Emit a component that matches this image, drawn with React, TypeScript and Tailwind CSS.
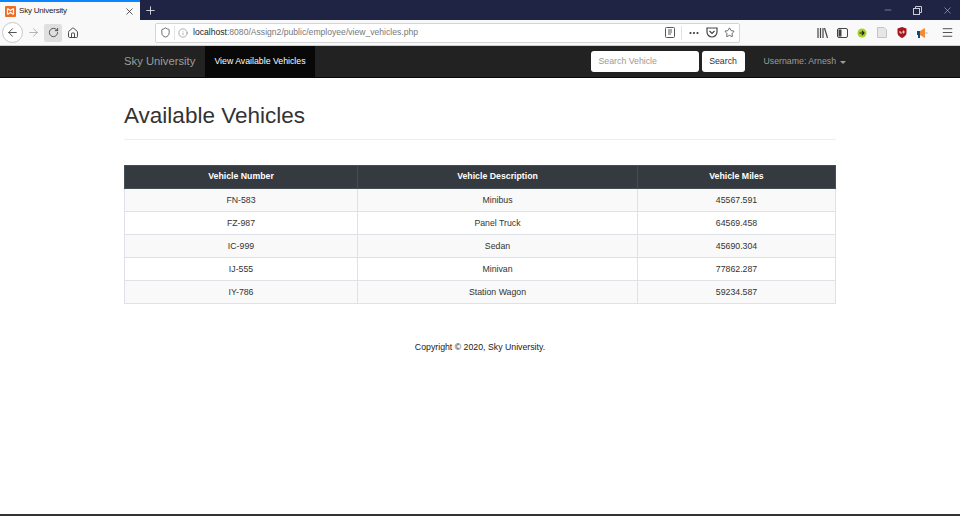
import { ArrowLeft, ArrowRight, RotateCw, Home, Shield, Info, Star, X, Plus, Minus, Menu, Ellipsis } from 'lucide-react';

const vehicles = [
  { number: 'FN-583', description: 'Minibus', miles: '45567.591' },
  { number: 'FZ-987', description: 'Panel Truck', miles: '64569.458' },
  { number: 'IC-999', description: 'Sedan', miles: '45690.304' },
  { number: 'IJ-555', description: 'Minivan', miles: '77862.287' },
  { number: 'IY-786', description: 'Station Wagon', miles: '59234.587' },
];

function BrowserChrome() {
  return (
    <div className="h-[46px] shrink-0 flex flex-col">
      <div className="h-[20px] bg-[#1f2445] flex items-stretch text-white">
        <div className="w-[140px] bg-[#f9f9fa] border-t-2 border-[#0a84ff] flex items-center pl-[5px] pr-[4px] text-[#222]">
          <svg width="11" height="11" viewBox="0 0 11 11" className="shrink-0">
            <rect width="11" height="11" rx="1" fill="#ee6c25" />
            <path d="M2.5 2.5 L5.5 4.5 L8.5 2.5 M2.5 8.5 L5.5 6.5 L8.5 8.5 M2.5 2.5 V8.5 M8.5 2.5 V8.5" stroke="#fff" strokeWidth="1.2" fill="none" />
          </svg>
          <span className="ml-[3px] text-[8px] tracking-[-0.2px] flex-1">Sky University</span>
          <X size={11} strokeWidth={1.6} className="mr-[1px]" />
        </div>
        <div className="w-[20px] flex items-center justify-center">
          <Plus size={13} strokeWidth={1.6} className="text-[#e6e7ee]" />
        </div>
        <div className="flex-1" />
        <div className="flex items-center gap-[20px] pr-[7px] text-[#c9cbd6]">
          <Minus size={10} strokeWidth={1.2} />
          <svg width="9" height="9" viewBox="0 0 9 9" fill="none" stroke="currentColor">
            <rect x="0.5" y="2.5" width="6" height="6" />
            <path d="M2.5 2.5 V0.5 H8.5 V6.5 H6.5" />
          </svg>
          <X size={11} strokeWidth={1.2} />
        </div>
      </div>
      <div className="h-[26px] bg-[#f9f9fa] border-b border-[#cfcfd2] flex items-center text-[#3a3a3c]">
        <div className="ml-[2px] w-[21px] h-[21px] rounded-full border border-[#c8c8ca] bg-white flex items-center justify-center">
          <ArrowLeft size={13} strokeWidth={1.6} />
        </div>
        <ArrowRight size={13} strokeWidth={1.6} className="ml-[4px] text-[#a8a8aa]" />
        <div className="ml-[4px] w-[18px] h-[18px] rounded-[2px] bg-[#dfdfe0] flex items-center justify-center">
          <RotateCw size={11} strokeWidth={1.8} />
        </div>
        <Home size={12} strokeWidth={1.8} className="ml-[5px]" />
        <div className="ml-[76px] w-[585px] h-[20px] bg-white border border-[#d4d4d6] rounded-[2px] flex items-center pl-[4px] pr-[3px] shrink-0">
          <Shield size={11} strokeWidth={1.6} />
          <div className="ml-[3px] w-px h-[14px] bg-[#e3e3e5]" />
          <Info size={10} strokeWidth={1.4} className="ml-[3px] text-[#77777a]" />
          <span className="ml-[5px] text-[8.6px] text-[#77777a]">
            <span className="text-[#222]">localhost</span>:8080/Assign2/public/employee/view_vehicles.php
          </span>
          <div className="flex-1" />
          <svg width="10" height="11" viewBox="0 0 10 11" fill="none" stroke="#555" className="mr-[6px]">
            <rect x="0.5" y="0.5" width="9" height="10" rx="1" />
            <path d="M3 3 H7 M3 5 H7 M3 7 H6" />
          </svg>
          <div className="w-px h-[14px] bg-[#e3e3e5] mr-[6px]" />
          <Ellipsis size={12} strokeWidth={2.4} className="mr-[6px]" />
          <svg width="12" height="11" viewBox="0 0 12 11" fill="none" stroke="#444" strokeWidth="1.2" className="mr-[6px]">
            <path d="M1 1 H11 V5 A5 5 0 0 1 1 5 Z" />
            <path d="M3.5 4 L6 6.5 L8.5 4" />
          </svg>
          <Star size={11} strokeWidth={1.6} className="mr-[1px]" />
        </div>
        <div className="flex-1" />
        <div className="flex items-center pr-[6px]">
          <svg width="11" height="10" viewBox="0 0 11 10" fill="none" stroke="#444" strokeWidth="1.2" className="mr-[9px]">
            <path d="M1 0 V10 M3.5 0 V10 M6 0 V10 M7.5 0 L10.5 10" />
          </svg>
          <svg width="11" height="10" viewBox="0 0 11 10" fill="none" stroke="#444" className="mr-[9px]">
            <rect x="0.5" y="0.5" width="10" height="9" rx="1.5" />
            <rect x="1.5" y="1.5" width="3" height="7" fill="#444" stroke="none" />
          </svg>
          <svg width="10" height="10" viewBox="0 0 10 10" className="mr-[10px]">
            <circle cx="5" cy="5" r="4.5" fill="#a8d02a" />
            <path d="M2.5 5 H7 M5 3 L7 5 L5 7" stroke="#222" strokeWidth="1.1" fill="none" />
          </svg>
          <svg width="10" height="11" viewBox="0 0 10 11" className="mr-[10px]">
            <path d="M0.5 0.5 H7 L9.5 3 V10.5 H0.5 Z" fill="#e6e6e6" stroke="#c4c4c4" />
          </svg>
          <svg width="10" height="11" viewBox="0 0 10 11" className="mr-[10px]">
            <path d="M0.5 1.5 L5 0 L9.5 1.5 V6 C9.5 8.5 7 10 5 11 C3 10 0.5 8.5 0.5 6 Z" fill="#a5171c" />
            <path d="M3 4 V6 H5 M6 4 H7 V6 H6 Z" stroke="#fff" strokeWidth="0.8" fill="none" />
          </svg>
          <svg width="11" height="10" viewBox="0 0 11 10" className="mr-[13px]">
            <rect x="0" y="3" width="3" height="4" fill="#0f4c81" />
            <path d="M3 3 L8 0 V10 L3 7 Z" fill="#f58a2e" />
            <rect x="8.5" y="4" width="2" height="2" fill="#b9d3ea" />
            <rect x="1" y="7" width="2" height="3" fill="#0f4c81" />
          </svg>
          <Menu size={13} strokeWidth={1.6} />
        </div>
      </div>
    </div>
  );
}

export default function App() {
  return (
    <div className="h-[516px] bg-white flex flex-col font-['Liberation_Sans',Arial,sans-serif] overflow-hidden">
      <BrowserChrome />

      <nav className="h-[32px] shrink-0 bg-[#222] border-b border-[#080808] pl-[124px] pr-[114px] flex items-stretch text-[8.75px]">
        <div className="flex items-center w-[81px] text-[11.25px] text-[#9d9d9d]">Sky University</div>
        <div className="flex items-center px-[9.4px] bg-[#080808] text-white">View Available Vehicles</div>
        <div className="flex-1" />
        <div className="flex items-center">
          <div className="w-[108px] h-[21px] bg-white rounded-[3px] flex items-center px-[8px] text-[#999]">Search Vehicle</div>
          <div className="ml-[3px] w-[43px] h-[21px] bg-white rounded-[3px] flex items-center justify-center text-[#333]">Search</div>
        </div>
        <div className="ml-[19px] flex items-center text-[#9d9d9d]">
          Username: Arnesh
          <span className="ml-[4px] mt-[1px] border-x-[3px] border-t-[3px] border-x-transparent border-t-[#9d9d9d]" />
        </div>
      </nav>

      <main className="w-[712px] ml-[124px] text-[#333]">
        <h1 className="mt-[25px] text-[22.5px] leading-[26px] font-normal">Available Vehicles</h1>
        <div className="mt-[10px] border-t border-[#eee]" />
        <table className="mt-[25px] w-full table-fixed border-collapse text-[8.75px] text-center">
          <thead>
            <tr className="h-[23px] bg-[#343a40] text-white">
              <th className="w-[233px] border border-[#454d55] font-bold">Vehicle Number</th>
              <th className="w-[280px] border border-[#454d55] font-bold">Vehicle Description</th>
              <th className="border border-[#454d55] font-bold">Vehicle Miles</th>
            </tr>
          </thead>
          <tbody>
            {vehicles.map((v, i) => (
              <tr key={v.number} className={`h-[23px] ${i % 2 === 0 ? 'bg-[#f9f9f9]' : 'bg-white'}`}>
                <td className="border border-[#dee2e6] pt-px">{v.number}</td>
                <td className="border border-[#dee2e6] pt-px">{v.description}</td>
                <td className="border border-[#dee2e6] pt-px">{v.miles}</td>
              </tr>
            ))}
          </tbody>
        </table>
        <p className="mt-[37px] text-center text-[8.75px] leading-[12px] text-[#222]">Copyright © 2020, Sky University.</p>
      </main>

      <div className="mt-auto h-[2px] bg-[#333]" />
    </div>
  );
}
